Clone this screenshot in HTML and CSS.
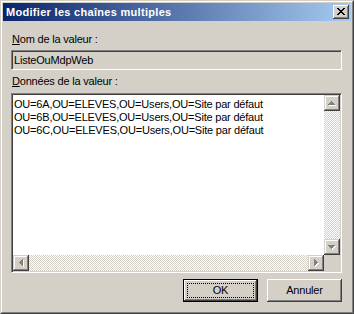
FILE: index.html
```html
<!DOCTYPE html>
<html lang="fr">
<head>
<meta charset="utf-8">
<title>Modifier les chaînes multiples</title>
<link rel="stylesheet" href="styles.css">
</head>
<body>
<div class="window">
  <div class="frame">
    <div class="caption">
      <span class="caption-title">Modifier les chaînes multiples</span>
      <span class="close">
        <svg width="8" height="7" viewBox="0 0 8 7" shape-rendering="crispEdges"><path fill="#000" d="M0 0h2v1H0zM6 0h2v1H6zM1 1h2v1H1zM5 1h2v1H5zM2 2h4v1H2zM3 3h2v1H3zM2 4h4v1H2zM1 5h2v1H1zM5 5h2v1H5zM0 6h2v1H0zM6 6h2v1H6z"/></svg>
      </span>
    </div>
    <div class="content">
      <div class="label"><u>N</u>om de la valeur :</div>
      <div class="edit">ListeOuMdpWeb</div>
      <div class="label label-data"><u>D</u>onnées de la valeur :</div>
      <div class="textarea">
        <div class="ta-text">OU=6A,OU=ELEVES,OU=Users,OU=Site par défaut
OU=6B,OU=ELEVES,OU=Users,OU=Site par défaut
OU=6C,OU=ELEVES,OU=Users,OU=Site par défaut</div>
        <div class="vscroll">
          <span class="sbtn"><svg width="8" height="5" viewBox="0 0 8 5" shape-rendering="crispEdges"><path fill="#fff" transform="translate(1 1)" d="M3 0h1v1h1v1h1v1h1v1H0V3h1V2h1V1h1z"/><path fill="#808080" d="M3 0h1v1h1v1h1v1h1v1H0V3h1V2h1V1h1z"/></svg></span>
          <span class="track"></span>
          <span class="sbtn"><svg width="8" height="5" viewBox="0 0 8 5" shape-rendering="crispEdges"><path fill="#fff" transform="translate(1 1)" d="M0 0h7v1H6v1H5v1H4v1H3V3H2V2H1V1H0z"/><path fill="#808080" d="M0 0h7v1H6v1H5v1H4v1H3V3H2V2H1V1H0z"/></svg></span>
        </div>
        <div class="hscroll">
          <span class="sbtn"><svg width="5" height="8" viewBox="0 0 5 8" shape-rendering="crispEdges"><path fill="#fff" transform="translate(1 1)" d="M3 0h1v7H3V6H2V5H1V4H0V3h1V2h1V1h1z"/><path fill="#808080" d="M3 0h1v7H3V6H2V5H1V4H0V3h1V2h1V1h1z"/></svg></span>
          <span class="track"></span>
          <span class="sbtn"><svg width="5" height="8" viewBox="0 0 5 8" shape-rendering="crispEdges"><path fill="#fff" transform="translate(1 1)" d="M0 0h1v1h1v1h1v1h1v1H3v1H2v1H1v1H0z"/><path fill="#808080" d="M0 0h1v1h1v1h1v1h1v1H3v1H2v1H1v1H0z"/></svg></span>
        </div>
        <div class="corner"></div>
      </div>
      <div class="buttons">
        <button class="btn btn-default" type="button"><span class="btn-label">OK</span></button>
        <button class="btn" type="button"><span class="btn-label">Annuler</span></button>
      </div>
    </div>
  </div>
</div>
</body>
</html>
```
FILE: styles.css
```css
html, body {
  margin: 0;
  padding: 0;
  background: #d4d0c8;
}

body {
  font-family: "Liberation Sans", Arial, sans-serif;
  font-size: 11px;
  color: #000;
  letter-spacing: -0.2px;
}

.window {
  width: 354px;
  height: 314px;
  box-sizing: border-box;
  border: 1px solid;
  border-color: #d4d0c8 #404040 #404040 #d4d0c8;
}

.frame {
  height: 100%;
  box-sizing: border-box;
  border: 1px solid;
  border-color: #ffffff #808080 #808080 #ffffff;
  padding: 1px;
  background: #d4d0c8;
  display: flex;
  flex-direction: column;
}

.caption {
  flex: none;
  height: 18px;
  display: flex;
  align-items: center;
  justify-content: space-between;
  padding: 0 2px 0 3px;
  background: linear-gradient(to right, #0a246a, #a6caf0);
}

.caption-title {
  color: #fff;
  font-weight: bold;
  font-size: 11px;
  letter-spacing: 0.3px;
  line-height: 13px;
  white-space: nowrap;
}

.close {
  width: 16px;
  height: 14px;
  box-sizing: border-box;
  display: flex;
  align-items: flex-start;
  justify-content: center;
  padding-top: 3px;
  background: #d4d0c8;
  box-shadow: inset -1px -1px #404040, inset 1px 1px #ffffff, inset -2px -2px #808080, inset 2px 2px #d4d0c8;
}

.close svg {
  display: block;
}

.content {
  flex: 1;
  display: flex;
  flex-direction: column;
  padding: 12px 9px 0 8px;
}

.label {
  height: 13px;
  line-height: 13px;
  padding-left: 1px;
  white-space: nowrap;
}

.label u {
  text-decoration-thickness: 1px;
  text-underline-offset: 1px;
}

.edit {
  margin-top: 4px;
  height: 20px;
  box-sizing: border-box;
  border: 1px solid;
  border-color: #808080 #ffffff #ffffff #808080;
  box-shadow: inset 1px 1px #404040, inset -1px -1px #d4d0c8;
  background: #d4d0c8;
  padding: 3px 2px 0;
  line-height: 13px;
  white-space: nowrap;
}

.label-data {
  margin-top: 5px;
}

.textarea {
  margin-top: 5px;
  height: 180px;
  box-sizing: border-box;
  border: 1px solid;
  border-color: #808080 #ffffff #ffffff #808080;
  padding: 1px;
  background: #404040;
  background-clip: border-box;
  display: grid;
  grid-template-columns: 1fr 16px;
  grid-template-rows: 1fr 16px;
  position: relative;
}

.textarea::after {
  content: "";
  position: absolute;
  inset: 0;
  pointer-events: none;
  box-shadow: inset 1px 1px #404040, inset -1px -1px #d4d0c8;
}

.ta-text {
  background: #fff;
  padding: 3px 0 0 1px;
  line-height: 13px;
  white-space: pre;
  overflow: hidden;
}

.vscroll {
  display: flex;
  flex-direction: column;
}

.hscroll {
  display: flex;
  flex-direction: row;
}

.track {
  flex: 1;
  background: repeating-conic-gradient(#ffffff 0 25%, #d4d0c8 0 50%) 0 0 / 2px 2px;
}

.sbtn {
  flex: none;
  width: 16px;
  height: 16px;
  box-sizing: border-box;
  display: flex;
  align-items: center;
  justify-content: center;
  background: #d4d0c8;
  box-shadow: inset -1px -1px #404040, inset 1px 1px #d4d0c8, inset -2px -2px #808080, inset 2px 2px #ffffff;
}

.sbtn svg {
  display: block;
}

.corner {
  background: #d4d0c8;
}

.buttons {
  margin-top: 6px;
  display: flex;
  justify-content: flex-end;
  gap: 9px;
}

.btn {
  width: 75px;
  height: 23px;
  box-sizing: border-box;
  margin: 0;
  padding: 0;
  border: none;
  background: #d4d0c8;
  font: inherit;
  letter-spacing: inherit;
  color: #000;
  display: flex;
  align-items: center;
  justify-content: center;
  box-shadow: inset -1px -1px #404040, inset 1px 1px #ffffff, inset -2px -2px #808080, inset 2px 2px #d4d0c8;
}

.btn-default {
  border: 1px solid #000;
  outline: 1px dotted #000;
  outline-offset: -5px;
}

.btn-label {
  line-height: 13px;
}
```
